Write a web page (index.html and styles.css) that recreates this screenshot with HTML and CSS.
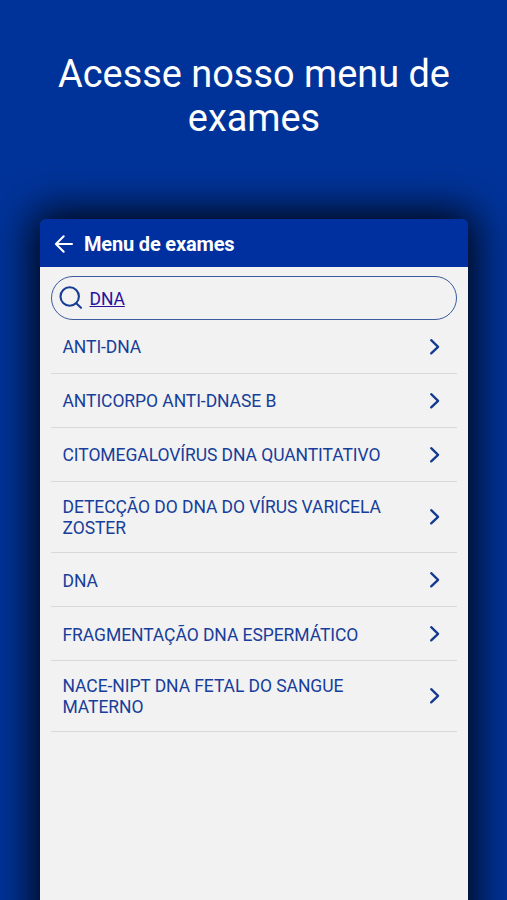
FILE: index.html
```html
<!DOCTYPE html>
<html lang="pt-BR">
<head>
<meta charset="utf-8">
<title>Menu de exames</title>
<link rel="stylesheet" href="styles.css">
</head>
<body>
<svg class="defs" aria-hidden="true"><symbol id="chevron" viewBox="0 0 12 18"><path d="M2.2 2.2 9.1 8.8l-6.9 6.6"/></symbol></svg>
<h1 class="headline">Acesse nosso menu de exames</h1>
<main class="phone">
  <header class="bar">
    <svg class="back" viewBox="0 0 20 20"><path d="M18 10H2M9.7 2.2 1.9 10l7.8 7.8"/></svg>
    <h2 class="bar-title">Menu de exames</h2>
  </header>
  <div class="content">
    <div class="search">
      <svg class="lens" viewBox="0 0 24 24"><circle cx="10.7" cy="10.5" r="9.2"/><path d="m17.2 17.2 4.8 4.6"/></svg>
      <span class="query">DNA</span>
    </div>
    <ul class="list">
      <li class="row"><span class="name">ANTI-DNA</span><svg class="chevron"><use href="#chevron"/></svg></li>
      <li class="row"><span class="name">ANTICORPO ANTI-DNASE B</span><svg class="chevron"><use href="#chevron"/></svg></li>
      <li class="row"><span class="name">CITOMEGALOVÍRUS DNA QUANTITATIVO</span><svg class="chevron"><use href="#chevron"/></svg></li>
      <li class="row tall"><span class="name">DETECÇÃO DO DNA DO VÍRUS VARICELA ZOSTER</span><svg class="chevron"><use href="#chevron"/></svg></li>
      <li class="row"><span class="name">DNA</span><svg class="chevron"><use href="#chevron"/></svg></li>
      <li class="row"><span class="name">FRAGMENTAÇÃO DNA ESPERMÁTICO</span><svg class="chevron"><use href="#chevron"/></svg></li>
      <li class="row tall"><span class="name">NACE-NIPT DNA FETAL DO SANGUE MATERNO</span><svg class="chevron"><use href="#chevron"/></svg></li>
    </ul>
  </div>
</main>
</body>
</html>
```
FILE: styles.css
```css
* { box-sizing: border-box; }
body {
  margin: 0;
  height: 900px;
  overflow: hidden;
  display: flex;
  flex-direction: column;
  background: #003399;
  font-family: Roboto, sans-serif;
}
.defs { display: none; }
.headline {
  margin: 0;
  height: 219px;
  flex: none;
  padding: 52px 39px 0 40px;
  color: #fff;
  font-size: 37.9px;
  font-weight: 400;
  line-height: 44px;
  text-align: center;
}
.phone {
  flex: none;
  height: 740px;
  margin: 0 39.5px 0 40px;
  border-radius: 6px 6px 0 0;
  background: linear-gradient(#00309f 48px, #f2f2f2 48px);
  box-shadow: 0 0 40px 7px rgba(0, 0, 0, .92);
}
.bar {
  display: flex;
  align-items: center;
  gap: 10px;
  height: 48px;
  padding: 2px 14px 0;
}
.back {
  width: 20px;
  height: 20px;
  fill: none;
  stroke: #fff;
  stroke-width: 2;
  stroke-linecap: round;
  stroke-linejoin: round;
}
.bar-title {
  margin: 0;
  color: #fff;
  font-size: 20px;
  font-weight: 700;
  line-height: 24px;
  letter-spacing: -.17px;
}
.content { padding: 9px 10.5px 0 11px; }
.search {
  display: flex;
  align-items: center;
  gap: 6.5px;
  height: 44px;
  padding-left: 7px;
  border: 1px solid #3b5b9d;
  border-radius: 22px;
}
.lens {
  width: 24px;
  height: 24px;
  fill: none;
  stroke: #173e93;
  stroke-width: 2.1;
  stroke-linecap: round;
}
.query {
  padding-top: 2px;
  color: #2a119c;
  font-size: 17.5px;
  letter-spacing: -.07px;
  text-decoration: underline;
}
.list { margin: 0; padding: 0; list-style: none; }
.row {
  display: flex;
  align-items: center;
  justify-content: space-between;
  height: 54.1px;
  padding: 0 16px 0 11.5px;
  border-bottom: 1px solid #d9d9d9;
}
.row.tall { height: 71px; }
.name {
  width: 335px;
  padding-top: 2px;
  color: #173e9a;
  font-size: 17.5px;
  line-height: 20.5px;
  letter-spacing: -.07px;
}
.row.tall .name { padding-top: 1px; }
.chevron {
  width: 12px;
  height: 18px;
  flex: none;
  fill: none;
  stroke: #143a8f;
  stroke-width: 2.3;
  stroke-linecap: round;
  stroke-linejoin: round;
}
```
